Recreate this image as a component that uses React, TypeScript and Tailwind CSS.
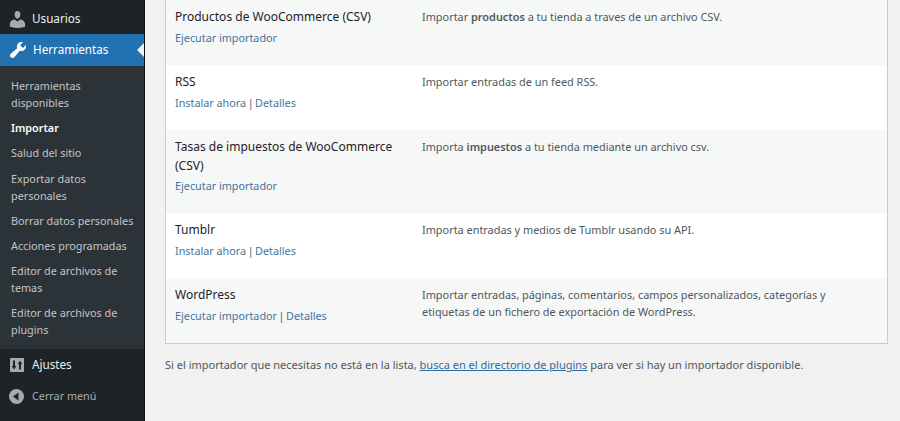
import React from 'react';

const font = "font-['Noto_Sans','Open_Sans',sans-serif]";

const submenu: { label: React.ReactNode; bold?: boolean }[] = [
    { label: <>Herramientas<br />disponibles</> },
    { label: 'Importar', bold: true },
    { label: 'Salud del sitio' },
    { label: <>Exportar datos<br />personales</> },
    { label: 'Borrar datos personales' },
    { label: 'Acciones programadas' },
    { label: <>Editor de archivos de<br />temas</> },
    { label: <>Editor de archivos de<br />plugins</> },
];

const Link = ({ children }: { children: React.ReactNode }) => (
    <span className="text-[#48749b]">{children}</span>
);

const Pipe = () => <span className="mx-[1.500px] text-[#555]">|</span>;

const installActions = (
    <>
        <Link>Instalar ahora</Link><Pipe /><Link>Detalles</Link>
    </>
);

const rows: { name: React.ReactNode; actions: React.ReactNode; desc: React.ReactNode; h: string; shaded: boolean }[] = [
    {
        name: 'Productos de WooCommerce (CSV)',
        actions: <Link>Ejecutar importador</Link>,
        desc: <>Importar <b className="font-semibold">productos</b> a tu tienda a traves de un archivo CSV.</>,
        h: 'h-[65px]',
        shaded: true,
    },
    { name: 'RSS', actions: installActions, desc: 'Importar entradas de un feed RSS.', h: 'h-[65px]', shaded: false },
    {
        name: <>Tasas de impuestos de WooCommerce<br />(CSV)</>,
        actions: <Link>Ejecutar importador</Link>,
        desc: <>Importa <b className="font-semibold">impuestos</b> a tu tienda mediante un archivo csv.</>,
        h: 'h-[83px]',
        shaded: true,
    },
    { name: 'Tumblr', actions: installActions, desc: 'Importa entradas y medios de Tumblr usando su API.', h: 'h-[65px]', shaded: false },
    {
        name: 'WordPress',
        actions: (
            <>
                <Link>Ejecutar importador</Link><Pipe /><Link>Detalles</Link>
            </>
        ),
        desc: <>Importar entradas, páginas, comentarios, campos personalizados, categorías y<br />etiquetas de un fichero de exportación de WordPress.</>,
        h: 'h-[65px]',
        shaded: true,
    },
];

export default function App() {
    return (
        <div className={`flex h-[421px] w-[900px] overflow-hidden bg-[#f1f1f1] ${font}`}>
            {/* Sidebar */}
            <aside className="flex w-[145px] shrink-0 flex-col border-r border-[#111] bg-[#1d2327]">
                <div className="flex h-[34px] shrink-0 items-center gap-[4px] pl-[7px] pt-[4px] text-[11.7px] text-[#eceeef]">
                    <svg viewBox="0 0 20 20" className="h-[21px] w-[21px] fill-[#a7aaad]">
                        <path d="M10 9.250c-2.270 0-2.730-3.440-2.730-3.440C7 4.020 7.820 2 9.970 2c2.160 0 2.980 2.020 2.710 3.810 0 0-.41 3.440-2.680 3.440zm0 2.570L12.720 10c2.390 0 4.520 2.330 4.520 4.530v2.490s-3.650 1.130-7.240 1.130c-3.650 0-7.240-1.130-7.240-1.130v-2.490c0-2.250 1.940-4.480 4.470-4.480z" />
                    </svg>
                    <span>Usuarios</span>
                </div>
                <div className="relative flex h-[32px] shrink-0 items-center gap-[5px] bg-[#2271b1] pl-[8px] text-[11.7px] text-white">
                    <svg viewBox="0 0 20 20" className="h-[20px] w-[20px] fill-white">
                        <path d="M16.680 9.770c-1.340 1.340-3.300 1.670-4.950.99l-5.410 6.520c-.99.99-2.590.99-3.580 0s-.99-2.590 0-3.580l6.520-5.420c-.68-1.650-.35-3.610.99-4.950 1.280-1.280 3.120-1.620 4.720-1.060l-2.890 2.890 2.820 2.820 2.860-2.870c.53 1.580.18 3.390-1.080 4.660z" />
                    </svg>
                    <span>Herramientas</span>
                    <div className="absolute right-0 top-[9px] h-0 w-0 border-y-[7px] border-r-[7px] border-y-transparent border-r-[#f1f1f1]" />
                </div>
                <nav className="flex h-[283px] shrink-0 flex-col bg-[#2c3338] pl-[11px] pt-[11px] text-[10.8px] leading-[17px] text-[#c3c4c7]">
                    {submenu.map((item, i) => (
                        <div key={i} className={`mb-[8.200px] ${item.bold ? 'font-semibold text-white' : ''}`}>
                            {item.label}
                        </div>
                    ))}
                </nav>
                <div className="flex h-[32px] shrink-0 items-center gap-[8px] pl-[10px] text-[11.7px] text-[#eceeef]">
                    <svg viewBox="0 0 14 14" className="h-[14px] w-[14px]">
                        <rect width="14" height="14" rx="1" fill="#a7aaad" />
                        <path d="M3 2.500h2v5.500h1.500L4 11.500 1.800 8H3zM10 2.500l2.300 3.500H11v5.500H9V6H7.700z" fill="#1d2327" />
                    </svg>
                    <span>Ajustes</span>
                </div>
                <div className="flex h-[30px] shrink-0 items-center gap-[8px] pl-[9px] text-[10.8px] text-[#a7aaad]">
                    <svg viewBox="0 0 15 15" className="h-[15px] w-[15px]">
                        <circle cx="7.500" cy="7.500" r="7.500" fill="#a7aaad" />
                        <path d="M9.500 3.500v8L4 7.500z" fill="#1d2327" />
                    </svg>
                    <span>Cerrar menú</span>
                </div>
            </aside>

            {/* Main */}
            <main className="flex-1 pl-[20px] pr-[12px]">
                <div className="border-x border-b border-[#c8ccd0] bg-white">
                    {rows.map((row, i) => (
                        <div key={i} className={`flex ${row.h} ${row.shaded ? 'bg-[#f6f7f7]' : 'bg-white'}`}>
                            <div className="w-[256px] shrink-0 pl-[9px] pt-[8px]">
                                <div className="text-[12px] leading-[18.500px] text-[#1d2327]">{row.name}</div>
                                <div className="mt-[2px] text-[10.8px] leading-[17px]">{row.actions}</div>
                            </div>
                            <div className="pt-[8px] text-[10.9px] leading-[17px] text-[#50575e]">{row.desc}</div>
                        </div>
                    ))}
                </div>
                <p className="mt-[12px] text-[11px] leading-[17px] text-[#50575e]">
                    Si el importador que necesitas no está en la lista,{' '}
                    <span className="text-[#2b6d9e] underline">busca en el directorio de plugins</span> para ver si hay un importador disponible.
                </p>
            </main>
        </div>
    );
}
